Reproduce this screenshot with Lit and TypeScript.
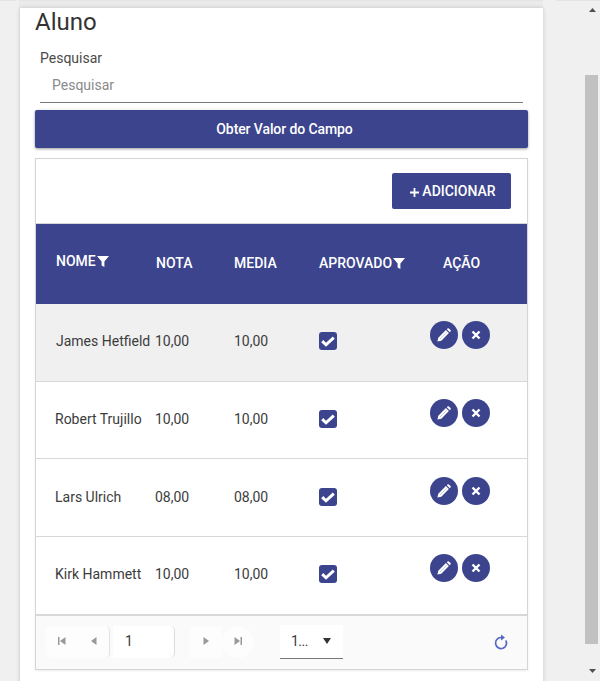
import { LitElement, html, css, svg } from "lit";
import { customElement } from "lit/decorators.js";

const filterIcon = html`<svg class="filter" viewBox="0 0 12 12"><path d="M0 1h12L7.4 6.4V12L4.6 10.4V6.4z" fill="#fff"/></svg>`;
const pencil = svg`<path d="M1.4 14.6l.9-3.9L9.9 3.1l3 3-7.6 7.6zM10.8 2.2l.7-.7a1 1 0 0 1 1.4 0l1.6 1.6a1 1 0 0 1 0 1.4l-.7.7z" fill="#fff"/><path d="M4 12l6.9-6.9" stroke="#3c448e" stroke-opacity=".35" stroke-width=".8" fill="none"/>`;

const rows = [
  { name: "James Hetfield", nota: "10,00", media: "10,00", selected: true },
  { name: "Robert Trujillo", nota: "10,00", media: "10,00", selected: false },
  { name: "Lars Ulrich", nota: "08,00", media: "08,00", selected: false },
  { name: "Kirk Hammett", nota: "10,00", media: "10,00", selected: false },
];

@customElement("app-root")
export class AppRoot extends LitElement {
  static styles = css`
    :host {
      display: block;
      height: 681px;
      overflow: hidden;
      background: #f0f0f0;
      font-family: Roboto, "Liberation Sans", sans-serif;
      color: #3c3c3c;
    }
    .page {
      display: flex;
      height: 681px;
      overflow: hidden;
      box-sizing: border-box;
      padding-top: 1px;
      background: linear-gradient(
          to right,
          #e4e4e4 16px,
          transparent 16px 19px,
          #e4e4e4 19px 543px,
          transparent 543px 556px,
          #e4e4e4 556px
        )
        top / 100% 1px no-repeat;
    }
    .main {
      width: 585px;
      padding-left: 19px;
      box-sizing: border-box;
      flex: none;
    }
    .sheet {
      width: 524px;
      background: #ebebeb;
      padding: 7px 0 0 1px;
      box-sizing: border-box;
    }
    .card {
      width: 523px;
      height: 720px;
      background: #fff;
      padding: 0 15px;
      box-sizing: border-box;
      box-shadow: 0 0 4px rgba(0, 0, 0, 0.18);
    }
    h1 {
      margin: 0;
      font-size: 24px;
      font-weight: 400;
      line-height: 28px;
      color: #333;
    }
    .field {
      margin: 0 5px;
      border-bottom: 1px solid #777;
      height: 67px;
      box-sizing: border-box;
    }
    .field label {
      display: block;
      font-size: 14px;
      line-height: 16px;
      padding-top: 14px;
      color: #4a4a4a;
    }
    .field .ph {
      display: block;
      font-size: 14px;
      line-height: 16px;
      padding: 11px 0 0 12px;
      color: #8a8a8a;
    }
    .get {
      display: block;
      width: 493px;
      height: 38px;
      margin-top: 7px;
      border: 0;
      border-radius: 2px;
      background: #3c448e;
      color: #fff;
      font: 500 14px Roboto, sans-serif;
      letter-spacing: -0.1px;
      box-shadow: 0 1px 3px rgba(0, 0, 0, 0.4);
      padding: 0 0 0 6px;
    }
    .grid {
      margin-top: 10px;
      width: 493px;
      height: 512px;
      border: 1px solid #d5d5d5;
      box-sizing: border-box;
      box-shadow: 0 1px 2px rgba(0, 0, 0, 0.08);
      display: flex;
      flex-direction: column;
    }
    .toolbar {
      height: 65px;
      flex: none;
      display: flex;
      justify-content: flex-end;
      align-items: flex-start;
      padding: 14px 16px 0 0;
      box-sizing: border-box;
      border-bottom: 1px solid #d5d5d5;
    }
    .add {
      width: 119px;
      height: 36px;
      border: 0;
      border-radius: 2px;
      background: #3c448e;
      color: #fff;
      font: 500 14px Roboto, sans-serif;
      display: flex;
      align-items: center;
      justify-content: center;
      padding: 0 0 0 3px;
    }
    .add svg { width: 9px; height: 9px; margin: 3px 3px 0 0; }
    .row, .head {
      display: grid;
      grid-template-columns: 100px 79px 85px 111px 1fr;
      padding-left: 19px;
      box-sizing: border-box;
    }
    .head {
      height: 80px;
      flex: none;
      background: #3c448e;
      color: #fff;
      font-size: 14px;
      font-weight: 500;
      padding-top: 31px;
      line-height: 16px;
    }
    .head > div { display: flex; align-items: flex-start; }
    .head .c1 { padding-left: 1px; margin-top: -2px; }
    .head .c2 { padding-left: 1px; }
    .head .c5 { padding-left: 13px; }
    .filter { width: 12px; height: 12px; margin-top: 2px; margin-left: 1px; }
    .row {
      height: 77.7px;
      flex: none;
      border-bottom: 1px solid #d8d8d8;
      font-size: 14px;
      color: #3c3c3c;
      line-height: 16px;
      padding-top: 29.2px;
    }
    .row.sel { background: #f0f0f0; }
    .row.sel .name { padding-left: 1px; }
    .name { white-space: nowrap; }
    .check {
      width: 18px;
      height: 18px;
      border-radius: 3px;
      background: #3c448e;
      display: block;
      margin-top: -1px;
    }
    .actions { display: flex; gap: 4px; margin-top: -11.8px; height: 28px; }
    .round {
      width: 28px;
      height: 28px;
      border-radius: 50%;
      background: #3c448e;
      display: flex;
      align-items: center;
      justify-content: center;
    }
    .round svg { width: 16px; height: 16px; display: block; }
    .foot {
      flex: 1;
      background: #fafafa;
      border-top: 1px solid #d8d8d8;
      display: flex;
      align-items: center;
      padding: 0 0 0 10px;
    }
    .pbtn {
      width: 32px;
      height: 32px;
      background: #fdfdfd;
      display: flex;
      align-items: center;
      justify-content: center;
      flex: none;
    }
    .pbtn svg { width: 8px; height: 8px; margin-top: -2px; }
    .pbtn.prev { border-radius: 0 5px 5px 0; border-right: 1px solid #e2e2e2; box-sizing: border-box; }
    .pbtn.first { border-radius: 5px 0 0 5px; }
    .pbtn.last { border-radius: 50%; }
    .page-input {
      width: 62px;
      height: 32px;
      margin-left: 3px;
      background: #fff;
      border-right: 1px solid #dcdcdc;
      border-radius: 0 5px 5px 0;
      box-sizing: border-box;
      font-size: 14px;
      line-height: 30px;
      padding-left: 12px;
    }
    .pbtn.next { margin-left: 15px; }
    .size {
      width: 63px;
      height: 34px;
      margin-left: 26px;
      background: #fff;
      border-bottom: 1px solid #777;
      box-sizing: border-box;
      font-size: 14px;
      display: flex;
      align-items: center;
      justify-content: space-between;
      padding: 0 12px 2px 11px;
      letter-spacing: -0.5px;
    }
    .size svg { width: 8px; height: 6px; }
    .refresh { margin-left: auto; margin-right: 18px; width: 16px; height: 16px; display: block; }
    .sb {
      width: 15px;
      flex: none;
      display: flex;
      flex-direction: column;
      align-items: center;
    }
    .sb svg { width: 7px; height: 4px; flex: none; margin: 7px 0 0 -1px; }
    .thumb { width: 13px; height: 569px; background: #c1c1c1; margin: 63px 2px 0 0; flex: none; }
    .sb svg.down { margin-top: 25px; }
  `;

  render() {
    return html`<div class="page">
      <div class="main">
        <div class="sheet">
        <div class="card">
          <h1>Aluno</h1>
          <div class="field"><label>Pesquisar</label><span class="ph">Pesquisar</span></div>
          <button class="get">Obter Valor do Campo</button>
          <div class="grid">
            <div class="toolbar">
              <button class="add"><svg viewBox="0 0 10 10"><path d="M4 0h2v4h4v2H6v4H4V6H0V4h4z" fill="#fff"/></svg>ADICIONAR</button>
            </div>
            <div class="head">
              <div class="c1">NOME${filterIcon}</div>
              <div class="c2">NOTA</div>
              <div class="c3">MEDIA</div>
              <div class="c4">APROVADO${filterIcon}</div>
              <div class="c5">AÇÃO</div>
            </div>
            ${rows.map(
              (r) => html`<div class="row ${r.selected ? "sel" : ""}">
                <div class="name">${r.name}</div>
                <div>${r.nota}</div>
                <div>${r.media}</div>
                <div>
                  <svg class="check" viewBox="0 0 18 18"><path d="M3.2 9.2L7 12.8 14.8 5.6" fill="none" stroke="#fff" stroke-width="3"/></svg>
                </div>
                <div class="actions">
                  <span class="round"><svg viewBox="0 0 16 16">${pencil}</svg></span>
                  <span class="round"><svg viewBox="0 0 16 16"><path d="M4.5 4.5l7 7M11.5 4.5l-7 7" stroke="#fff" stroke-width="2.4" fill="none"/></svg></span>
                </div>
              </div>`
            )}
            <div class="foot">
              <span class="pbtn first"><svg viewBox="0 0 8 8"><path d="M0 0h1.5v8H0zM7.5 0v8L2 4z" fill="#999"/></svg></span>
              <span class="pbtn prev"><svg viewBox="0 0 8 8"><path d="M6.5 0v8L1 4z" fill="#999"/></svg></span>
              <span class="page-input">1</span>
              <span class="pbtn next"><svg viewBox="0 0 8 8"><path d="M1.5 0v8L7 4z" fill="#999"/></svg></span>
              <span class="pbtn last"><svg viewBox="0 0 8 8"><path d="M.5 0v8L6 4zM6.5 0H8v8H6.5z" fill="#999"/></svg></span>
              <div class="size"><span>1...</span><svg viewBox="0 0 8 6"><path d="M0 0h8L4 6z" fill="#333"/></svg></div>
              <svg class="refresh" viewBox="0 0 16 16"><path d="M8 3.5A5.5 5.5 0 1 0 12.8 6.3" fill="none" stroke="#5468c8" stroke-width="1.7"/><path d="M8 .5L12 3.5 8 6.5z" fill="#5468c8"/></svg>
            </div>
          </div>
        </div>
        </div>
      </div>
      <div class="sb">
        <svg viewBox="0 0 7 4"><path d="M3.5 0L7 4H0z" fill="#505050"/></svg>
        <div class="thumb"></div>
        <svg class="down" viewBox="0 0 7 4"><path d="M0 0h7L3.5 4z" fill="#505050"/></svg>
      </div>
    </div>`;
  }
}
